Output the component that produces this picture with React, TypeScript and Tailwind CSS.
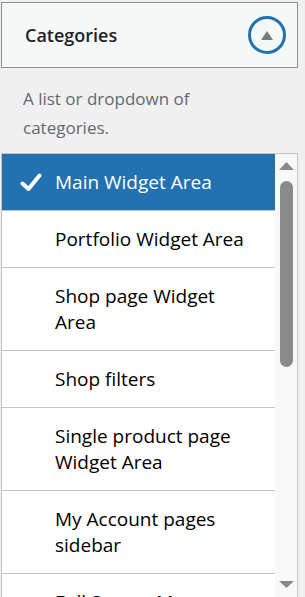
import { useState } from 'react';

const areas = [
    'Main Widget Area',
    'Portfolio Widget Area',
    'Shop page Widget Area',
    'Shop filters',
    'Single product page Widget Area',
    'My Account pages sidebar',
    'Full Screen Menu Area',
    'Footer Widget Area',
];

function CheckMark() {
    return (
        <svg width="22" height="19" viewBox="0 0 22 19" className="shrink-0">
            <path d="M2.5 10.5 L8.5 16 L19.5 2.5" fill="none" stroke="white" strokeWidth="4" strokeLinecap="round" strokeLinejoin="round" />
        </svg>
    );
}

export default function App() {
    const [selected] = useState(0);

    return (
        <div className="min-h-screen bg-[#f0f0f1] pl-px pr-[7px] pt-[2px] font-['Segoe_UI','Open_Sans',sans-serif]">
            {/* Widget header */}
            <div className="flex h-[66px] items-center justify-between border border-[#8c8f94] bg-[#f6f7f7] pl-[23px] pr-[11px]">
                <h3 className="text-[18px] font-semibold text-[#1d2327]">Categories</h3>
                <button className="flex h-[38px] w-[38px] items-center justify-center rounded-full border-[3px] border-[#2271b1]">
                    <svg width="12" height="9" viewBox="0 0 12 9">
                        <path d="M6 0 L12 9 L0 9 Z" fill="#787c82" />
                    </svg>
                </button>
            </div>

            {/* Description */}
            <p className="pl-[22px] pr-[60px] pt-[16px] text-[17px] leading-[29px] text-[#646970]">
                A list or dropdown of categories.
            </p>

            {/* Sidebar select list */}
            <div className="mt-[11px] flex h-[446px] overflow-hidden border border-[#c3c4c7] bg-white">
                <ul className="flex-1">
                    {areas.map((a, i) => (
                        <li
                            key={a}
                            className={`flex items-start border-b border-[#c3c4c7] py-[15px] pl-[53px] pr-[24px] text-[19px] leading-[26px] ${
                                i === selected ? 'relative bg-[#2271b1] text-white' : 'text-black'
                            }`}
                        >
                            {i === selected && (
                                <span className="absolute left-[18px] top-[19px]">
                                    <CheckMark />
                                </span>
                            )}
                            {a}
                        </li>
                    ))}
                </ul>

                {/* Scrollbar */}
                <div className="flex w-[22px] flex-col items-center bg-[#f8f8f8]">
                    <svg width="15" height="8" viewBox="0 0 15 8" className="mt-[8px]">
                        <path d="M7.5 0 L15 8 L0 8 Z" fill="#8a8a8a" />
                    </svg>
                    <div className="mt-[11px] h-[186px] w-[13px] rounded-full bg-[#8a8a8a]" />
                    <div className="flex-1" />
                    <svg width="15" height="7" viewBox="0 0 15 7" className="mb-[10px]">
                        <path d="M0 0 L15 0 L7.5 7 Z" fill="#8a8a8a" />
                    </svg>
                </div>
            </div>
        </div>
    );
}
